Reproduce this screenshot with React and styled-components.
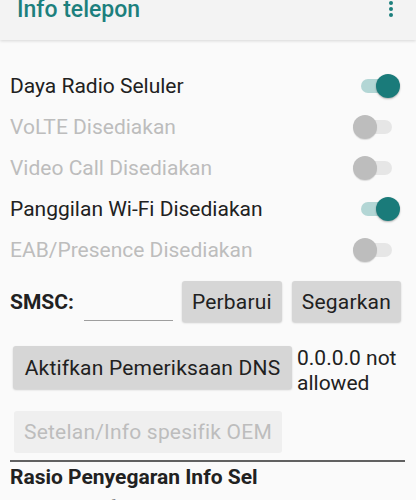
import React from "react";
import styled, { createGlobalStyle } from "styled-components";

const GlobalStyle = createGlobalStyle`
  html, body {
    margin: 0;
    padding: 0;
    background: #fafafa;
  }
  body {
    font-family: Roboto, "Liberation Sans", sans-serif;
    color: #212121;
    overflow: hidden;
  }
`;

const Page = styled.div`
  width: 416px;
  height: 500px;
  overflow: hidden;
  background: #fafafa;
`;

const AppBar = styled.header`
  height: 40px;
  display: flex;
  justify-content: space-between;
  align-items: flex-start;
  padding: 0 17px;
  background: #f3f3f3;
  box-shadow: 0 1px 3px rgba(0, 0, 0, 0.14);
  position: relative;
  z-index: 1;
`;

const Title = styled.h1`
  margin: 0;
  font-size: 23px;
  line-height: 20px;
  font-weight: 500;
  color: #1c7f7d;
`;

const MenuDots = styled.div`
  display: flex;
  flex-direction: column;
  gap: 2px;
  margin-top: 1px;
  margin-right: 6px;
  span {
    width: 4px;
    height: 4px;
    border-radius: 50%;
    background: #1c7f7d;
  }
`;

const Content = styled.main`
  padding: 25px 0 0;
`;

const ToggleRow = styled.div`
  height: 41px;
  display: flex;
  align-items: center;
  justify-content: space-between;
  padding: 0 15px 0 10px;
  font-size: 21px;
  color: ${(p) => (p.disabled ? "#bdbdbd" : "#212121")};
`;

const Track = styled.div`
  position: relative;
  width: 31px;
  height: 14px;
  border-radius: 7px;
  margin-right: 9px;
  background: ${(p) => (p.on ? "#b3d6d5" : "#e6e6e6")};
`;

const Thumb = styled.div`
  position: absolute;
  top: -5px;
  left: ${(p) => (p.on ? "15px" : "-8px")};
  width: 24px;
  height: 24px;
  border-radius: 50%;
  background: ${(p) => (p.on ? "#1a7b7a" : "#bdbdbd")};
  box-shadow: ${(p) =>
    p.on ? "0 1px 2px rgba(0, 0, 0, 0.3)" : "0 1px 1px rgba(0, 0, 0, 0.12)"};
`;

const Switch = ({ on }) => (
  <Track on={on}>
    <Thumb on={on} />
  </Track>
);

const SmscRow = styled.div`
  display: flex;
  align-items: center;
  margin-top: 11px;
  padding-left: 10px;
`;

const Label = styled.span`
  font-size: 21px;
  font-weight: 700;
  color: #212121;
`;

const Field = styled.div`
  width: 89px;
  height: 20px;
  margin: 18px 9px 0 10px;
  border-bottom: 1px solid #9e9e9e;
`;

const Button = styled.button`
  width: ${(p) => p.w}px;
  height: ${(p) => p.h || 41}px;
  padding: 0;
  margin-right: 10px;
  border: none;
  border-radius: 3px;
  font-family: Roboto, "Liberation Sans", sans-serif;
  font-size: 21px;
  letter-spacing: 0.2px;
  color: ${(p) => (p.disabled ? "#bdbdbd" : "#212121")};
  background: ${(p) => (p.disabled ? "#efefef" : "#d6d6d6")};
  box-shadow: ${(p) =>
    p.disabled ? "none" : "0 1px 2px rgba(0, 0, 0, 0.18)"};
  white-space: nowrap;
`;

const DnsRow = styled.div`
  display: flex;
  align-items: flex-start;
  margin-top: 24px;
  padding-left: 13px;
`;

const DnsStatus = styled.div`
  margin-left: -5px;
  font-size: 21px;
  line-height: 25px;
  color: #212121;
`;

const OemRow = styled.div`
  margin-top: 15px;
  padding-left: 14px;
`;

const Divider = styled.hr`
  margin: 7px 11px 0 10px;
  border: none;
  border-top: 2px solid #616161;
`;

const Heading = styled.h2`
  margin: 3px 0 0 10px;
  font-size: 21px;
  line-height: 24px;
  font-weight: 700;
  color: #212121;
`;

const Value = styled.div`
  margin-top: 7px;
  padding-left: 20px;
  font-size: 21px;
  line-height: 24px;
  color: #212121;
`;

const toggles = [
  { label: "Daya Radio Seluler", on: true },
  { label: "VoLTE Disediakan", on: false, disabled: true },
  { label: "Video Call Disediakan", on: false, disabled: true },
  { label: "Panggilan Wi-Fi Disediakan", on: true },
  { label: "EAB/Presence Disediakan", on: false, disabled: true },
];

export default function App() {
  return (
    <Page>
      <GlobalStyle />
      <AppBar>
        <Title>Info telepon</Title>
        <MenuDots>
          <span />
          <span />
          <span />
        </MenuDots>
      </AppBar>
      <Content>
        {toggles.map((t) => (
          <ToggleRow key={t.label} disabled={t.disabled}>
            {t.label}
            <Switch on={t.on} />
          </ToggleRow>
        ))}
        <SmscRow>
          <Label>SMSC:</Label>
          <Field />
          <Button w={100}>Perbarui</Button>
          <Button w={109}>Segarkan</Button>
        </SmscRow>
        <DnsRow>
          <Button w={279} h={43}>
            Aktifkan Pemeriksaan DNS
          </Button>
          <DnsStatus>
            0.0.0.0 not
            <br />
            allowed
          </DnsStatus>
        </DnsRow>
        <OemRow>
          <Button w={268} h={42} disabled>
            Setelan/Info spesifik OEM
          </Button>
        </OemRow>
        <Divider />
        <Heading>Rasio Penyegaran Info Sel</Heading>
        <Value>Dinonaktifkan</Value>
      </Content>
    </Page>
  );
}
